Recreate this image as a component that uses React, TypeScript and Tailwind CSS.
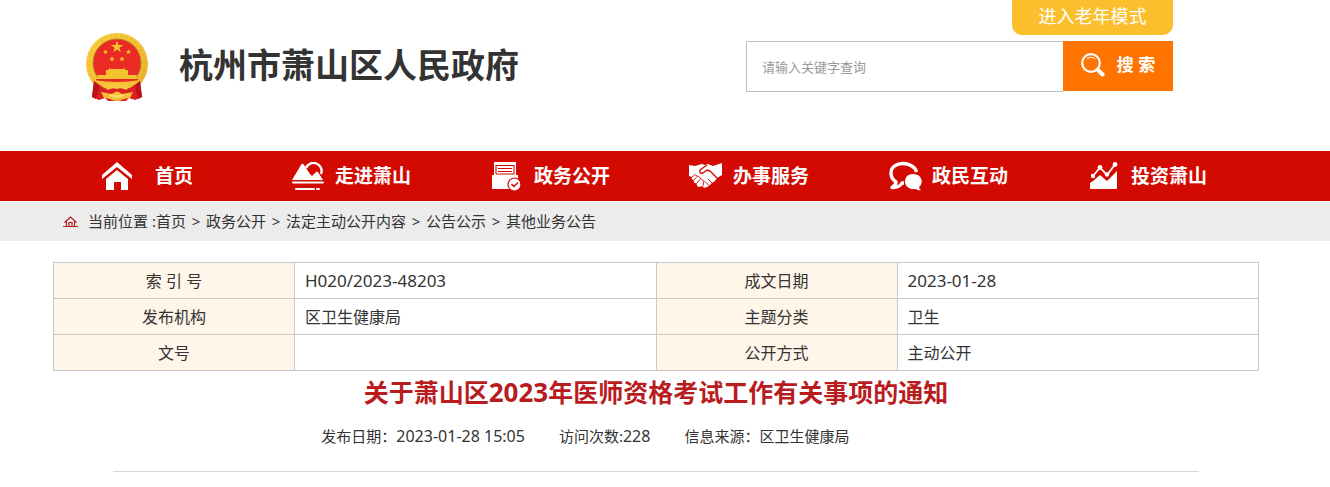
import React from "react";

type NavItem = {
  label: string;
  icon: React.ReactNode;
  iconClassName?: string;
};

type InfoRow = {
  label: string;
  value: string;
}[];

const STAR =
  "M0 -10 L2.4 -3.2 L9.5 -3.1 L3.8 1.2 L5.9 8.1 L0 4 L-5.9 8.1 L-3.8 1.2 L-9.5 -3.1 L-2.4 -3.2 Z";

const Emblem: React.FC = () => (
  <svg width="64" height="70" viewBox="0 0 64 70" aria-hidden="true">
    <defs>
      <linearGradient id="gold" x1="0" y1="0" x2="1" y2="1">
        <stop offset="0" stopColor="#f9cf3f" />
        <stop offset="0.5" stopColor="#f4c035" />
        <stop offset="1" stopColor="#e8ab28" />
      </linearGradient>
    </defs>
    <circle cx="32" cy="32" r="31" fill="url(#gold)" />
    <circle cx="32" cy="32" r="28" fill="none" stroke="#e9ad2b" strokeWidth="1" strokeDasharray="2 3" />
    <circle cx="32" cy="31" r="24" fill="#ea2a24" stroke="#b9811f" strokeWidth="1" />
    <g fill="#f5c32f">
      <path d={STAR} transform="translate(32 15) scale(0.64)" />
      <path d={STAR} transform="translate(20.500 20) scale(0.28)" />
      <path d={STAR} transform="translate(43.500 20) scale(0.28)" />
      <path d={STAR} transform="translate(27 27) scale(0.3)" />
      <path d={STAR} transform="translate(37 27) scale(0.3)" />
      <path d="M24 36 L26 37 H38 L40 36 V38 H43 V43 H21 V38 H24 Z" />
      <path d="M12 43 H52 L51 47 H13 Z" />
    </g>
    <path d="M11 47 H53 V49 H11 Z" fill="#ea2a24" />
    <path d="M9 48 Q32 52 55 48 L50 58 H14 Z" fill="#f4bf33" />
    <path d="M9 49 L19 56 L25 57 L32 54 L39 57 L45 56 L55 49 L57 65 L50 68 L44 66 L41 69 H23 L20 66 L14 68 L7 65 Z" fill="#dc2022" />
    <path d="M9 49 L14 54 L11 67 L7 65 Z M55 49 L50 54 L53 67 L57 65 Z" fill="#b81419" />
    <path d="M20 55 Q25 50 28 53 Q32 51 36 53 Q39 50 44 55 L41 58 Q37 55 32 57 Q27 55 23 58 Z" fill="#f6c83f" />
    <path d="M16 60 L27 62 Q32 57 37 62 L48 60 L45 66 L39 67 Q32 71 25 67 L19 66 Z" fill="#f3bd35" />
    <path d="M25 63 Q32 66 39 63" fill="none" stroke="#fbe072" strokeWidth="2" />
  </svg>
);

const HomeIcon: React.FC = () => (
  <svg width="30" height="29" viewBox="0 0 30 29" fill="currentColor" aria-hidden="true">
    <path d="M15 0 L30 13 V17 L15 5 L0 17 V13 Z" />
    <path d="M15 8 L26 17 V28 H19 V20 H12 V28 H4 V17 Z" />
  </svg>
);

const SceneryIcon: React.FC = () => (
  <svg width="32" height="29" viewBox="0 0 32 29" aria-hidden="true">
    <path d="M14 6 A8 8 0 1 1 29 12" fill="none" stroke="currentColor" strokeWidth="2.4" />
    <path
      d="M0 18 L9 3 Q10 0 12 3 L18 12 L20 14 L24 10 Q25 9 26 10 L31 18 Z"
      fill="currentColor"
    />
    <path d="M1 20.5 H31 M4 27 H22 M25 27 H27" stroke="currentColor" strokeWidth="2" strokeLinecap="round" />
  </svg>
);

const DocumentIcon: React.FC = () => (
  <svg width="30" height="29" viewBox="0 0 30 29" aria-hidden="true">
    <path d="M2 0 H24 V13 H26 V27 H0 V13 H2 Z" fill="currentColor" />
    <path d="M4 12 V3.5 H22 V12 H4 M6 6.5 H20 M6 9.5 H20" fill="none" stroke="#d30a02" strokeWidth="1.1" />
    <circle cx="22.5" cy="22.5" r="6.5" fill="currentColor" stroke="#d30a02" strokeWidth="1.2" />
    <path d="M19.5 22 L22 24.5 L26 20.5" fill="none" stroke="#d30a02" strokeWidth="1.5" />
  </svg>
);

const HandshakeIcon: React.FC = () => (
  <svg width="34" height="26" viewBox="0 0 34 26" aria-hidden="true">
    <path
      d="M0 2 L6 3 L13 1 L16 2 L19 1 L24 3 L33 0 V12 L28 15 L26 18 L23 20 L21 22 L18 24 Q15 26 13 23 L10 24 Q7 23 8 20 Q4 21 5 17 Q2 17 3 14 L0 13 Z"
      fill="currentColor"
    />
    <path
      d="M18 2 L11 7 Q10 11 14 10 L18 7 L21 8 L28 15"
      fill="none"
      stroke="#d30a02"
      strokeWidth="1.4"
      strokeLinejoin="round"
    />
    <path
      d="M3 14 L6 11.5 L8 13 L10.5 14 L12.5 16.5 L15 18 L14 23 M5 17 L8 13.5 M8 20 L11.5 15.5 M19 16 L23 20 M16 18.5 L20 22.5"
      fill="none"
      stroke="#d30a02"
      strokeWidth="0.9"
      strokeLinejoin="round"
    />
  </svg>
);

const ChatIcon: React.FC = () => (
  <svg width="33" height="30" viewBox="0 0 33 30" aria-hidden="true">
    <path
      d="M27.5 11 C25 0 2 -1 2 12 C2 16 4 19 7 21 Q7 24 3 26.5 Q10 27 13 22 H15"
      fill="none"
      stroke="currentColor"
      strokeWidth="3.4"
      strokeLinejoin="round"
    />
    <path
      d="M24 13 C33 13 35 22 30 26 Q30 28 32 29 Q29 30 27 28 C20 29 16 25 16 20.5 C16 16 19 13 24 13 Z"
      fill="currentColor"
    />
  </svg>
);

const ChartIcon: React.FC = () => (
  <svg width="28" height="28" viewBox="0 0 28 28" aria-hidden="true">
    <path d="M0 21 L3 19 L10 13 L17 19 L27 9 V26 Q27 27 26 27 H1 Q0 27 0 26 Z" fill="currentColor" />
    <path d="M3 14 L10 5.5 L17 13 L25 2.5" fill="none" stroke="currentColor" strokeWidth="1.8" />
    <g fill="currentColor">
      <circle cx="3" cy="14" r="2.2" />
      <circle cx="10" cy="5.5" r="2.4" />
      <circle cx="17" cy="12.5" r="2.2" />
      <circle cx="25" cy="2.5" r="2.4" />
    </g>
  </svg>
);

const SearchIcon: React.FC = () => (
  <svg width="24" height="24" viewBox="0 0 24 24" fill="none" stroke="currentColor" aria-hidden="true">
    <circle cx="10" cy="10" r="8.8" strokeWidth="2.2" />
    <path d="M6 5.5 Q10 2.8 14 5.5" strokeWidth="1" />
    <path d="M16.5 16.5 L21.5 21.5" strokeWidth="4" strokeLinecap="round" />
  </svg>
);

const CrumbHomeIcon: React.FC = () => (
  <svg width="15" height="11" viewBox="0 0 15 11" fill="none" stroke="#b91c1f" aria-hidden="true">
    <path d="M1.5 6.5 L7.5 1 L13.5 6.5 M3.5 5.5 V10 M11.5 5.5 V10 M6 10 V6.5 H9 V10" strokeWidth="1.2" />
    <path d="M0 10.5 H15" strokeWidth="1" />
  </svg>
);

const NAV_ITEMS: NavItem[] = [
  { label: "首页", icon: <HomeIcon />, iconClassName: "justify-end" },
  { label: "走进萧山", icon: <SceneryIcon /> },
  { label: "政务公开", icon: <DocumentIcon /> },
  { label: "办事服务", icon: <HandshakeIcon /> },
  { label: "政民互动", icon: <ChatIcon /> },
  { label: "投资萧山", icon: <ChartIcon /> },
];

const CRUMBS = ["首页", "政务公开", "法定主动公开内容", "公告公示", "其他业务公告"];

const INFO_ROWS: InfoRow[] = [
  [
    { label: "索 引 号", value: "H020/2023-48203" },
    { label: "成文日期", value: "2023-01-28" },
  ],
  [
    { label: "发布机构", value: "区卫生健康局" },
    { label: "主题分类", value: "卫生" },
  ],
  [
    { label: "文号", value: "" },
    { label: "公开方式", value: "主动公开" },
  ],
];

const Header: React.FC = () => (
  <header className="flex h-[151px] items-start justify-between pr-[157px] pl-[85px]">
    <a href="#" className="flex items-center gap-[30px] pt-8">
      <Emblem />
      <h1 className="pb-1 text-[34px] leading-10 font-bold text-[#333]">杭州市萧山区人民政府</h1>
    </a>

    <div className="flex w-[427px] flex-col items-end gap-[6px]">
      <button className="h-[35px] w-[161px] rounded-b-[10px] bg-[#fbbf2d] pb-1 text-lg leading-7 text-white">
        进入老年模式
      </button>
      <form className="flex w-full items-start">
        <input
          type="text"
          aria-label="请输入关键字查询"
          placeholder="请输入关键字查询"
          className="h-[51px] min-w-0 flex-1 border border-r-0 border-[#bfbfbf] px-[15px] text-[13px] text-[#333] outline-none placeholder:text-[#999]"
        />
        <button
          type="submit"
          className="flex h-[50px] w-[110px] items-center justify-center gap-3 bg-[#ff7300] pb-[2px] text-[17px] font-bold text-white"
        >
          <SearchIcon />
          搜 索
        </button>
      </form>
    </div>
  </header>
);

const Nav: React.FC = () => (
  <nav className="flex h-[50px] bg-[#d30a02] pr-[83px] pl-[53px] text-white">
    {NAV_ITEMS.map(({ label, icon, iconClassName = "justify-center" }) => (
      <a key={label} href="#" className="flex flex-1 items-center pl-[33px]">
        <span className={`flex w-[46px] ${iconClassName}`}>{icon}</span>
        <span className="w-[84px] text-center text-[19px] font-bold whitespace-nowrap">{label}</span>
      </a>
    ))}
  </nav>
);

const Breadcrumb: React.FC = () => (
  <div className="flex h-10 items-center bg-[#ececec] pl-[63px] text-[15px] text-[#333]">
    <CrumbHomeIcon />
    <span className="pl-[10px]">当前位置 :</span>
    {CRUMBS.map((crumb, index) => (
      <React.Fragment key={crumb}>
        {index > 0 && <span className="w-5 text-center">&gt;</span>}
        <a href="#">{crumb}</a>
      </React.Fragment>
    ))}
  </div>
);

const InfoTable: React.FC = () => (
  <table className="w-full table-fixed border-collapse text-base text-[#333]">
    <colgroup>
      <col className="w-[20%]" />
      <col className="w-[30%]" />
      <col className="w-[20%]" />
      <col className="w-[30%]" />
    </colgroup>
    <tbody>
      {INFO_ROWS.map((row) => (
        <tr key={row[0].label} className="h-9">
          {row.map(({ label, value }) => (
            <React.Fragment key={label}>
              <th scope="row" className="border border-[#c8c8c8] bg-[#fff5e9] font-normal">
                {label}
              </th>
              <td className="border border-[#c8c8c8] px-[10px]">
                {/^[A-Z0-9]/.test(value) ? <span className="text-[17px] leading-6">{value}</span> : value}
              </td>
            </React.Fragment>
          ))}
        </tr>
      ))}
    </tbody>
  </table>
);

const App: React.FC = () => {
  return (
    <div className="bg-white font-['Noto_Sans','Noto_Sans_CJK_SC',sans-serif]">
      <Header />
      <Nav />
      <Breadcrumb />
      <main className="pt-[21px] pr-[71px] pl-[53px]">
        <InfoTable />
        <h2 className="text-center text-[25px] leading-[42px] font-bold text-[#b91c1f]">
          关于萧山区<span className="text-[26px]">2023</span>年医师资格考试工作有关事项的通知
        </h2>
        <div className="mx-auto flex w-[90%] gap-[34px] border-b border-[#d9d9d9] pt-3 pb-6 pl-[208px] text-[15px] leading-[22px] text-[#333]">
          <span>
            发布日期：<span className="text-base leading-[22px]">2023-01-28 15:05</span>
          </span>
          <span>
            访问次数:<span className="text-base leading-[22px]">228</span>
          </span>
          <span>信息来源：区卫生健康局</span>
        </div>
      </main>
    </div>
  );
};

export default App;
